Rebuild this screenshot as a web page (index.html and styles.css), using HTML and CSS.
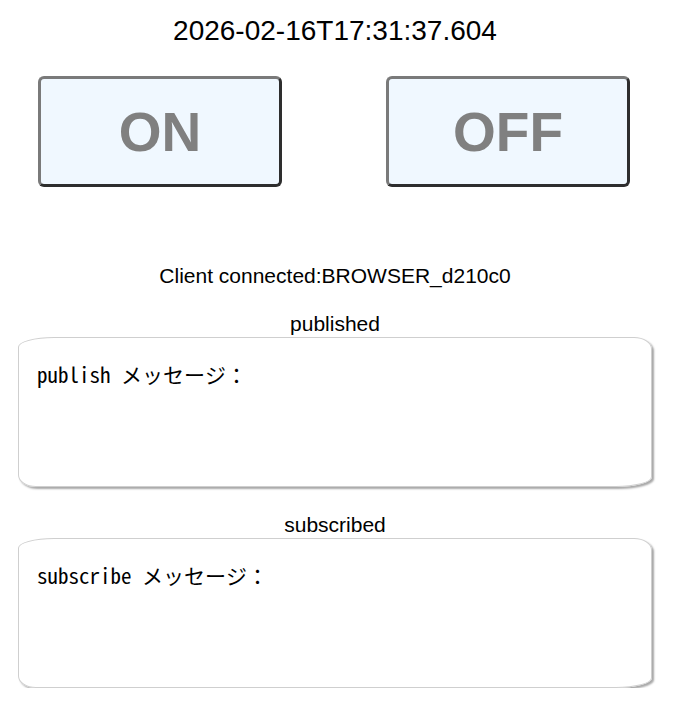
FILE: index.html
```html
<!DOCTYPE html>
<html>
<head>
<meta charset="utf-8">
<link rel="stylesheet" href="styles.css">
</head>
<body>
<div class="page">
  <div class="clock">2026-02-16T17:31:37.604</div>
  <div class="buttons">
    <button class="btn">ON</button>
    <button class="btn">OFF</button>
  </div>
  <div class="status">Client connected:BROWSER_d210c0</div>
  <div class="section">
    <div class="label">published</div>
    <div class="box">publish メッセージ：</div>
  </div>
  <div class="section">
    <div class="label">subscribed</div>
    <div class="box">subscribe メッセージ：</div>
  </div>
</div>
</body>
</html>
```
FILE: styles.css
```css
html, body {
  margin: 0;
  padding: 0;
  background: #fff;
}
body {
  font-family: "Liberation Sans", Arial, sans-serif;
  color: #000;
}
.page {
  width: 634px;
  margin-left: 18px;
  padding-top: 15px;
  display: flex;
  flex-direction: column;
}
.clock {
  text-align: center;
  font-size: 28px;
  line-height: 32px;
}
.buttons {
  display: flex;
  justify-content: space-between;
  padding: 0 22px 0 20px;
  margin-top: 29px;
}
.btn {
  width: 244px;
  height: 111px;
  background: #f0f8ff;
  border: 3px solid;
  border-color: #7a7a7a #2e2e2e #2e2e2e #7a7a7a;
  border-radius: 6px;
  font-family: "Liberation Sans", Arial, sans-serif;
  font-weight: bold;
  font-size: 55px;
  color: #808080;
  padding: 0;
}
.status {
  text-align: center;
  font-size: 21px;
  line-height: 24px;
  margin-top: 77px;
}
.section {
  display: flex;
  flex-direction: column;
  margin-top: 24px;
}
.section + .section {
  margin-top: 26px;
}
.label {
  text-align: center;
  font-size: 21px;
  line-height: 24px;
}
.box {
  height: 150px;
  box-sizing: border-box;
  margin-top: 1px;
  border: 1px solid #cfcfcf;
  border-radius: 36px 18px 36px 18px / 10px 12px 10px 12px;
  box-shadow: 2px 2px 2px #a8a8a8;
  padding: 23px 18px;
  font-family: "Noto Sans Mono CJK JP", "Noto Sans CJK JP", monospace;
  font-size: 21px;
  line-height: 26px;
}
```
